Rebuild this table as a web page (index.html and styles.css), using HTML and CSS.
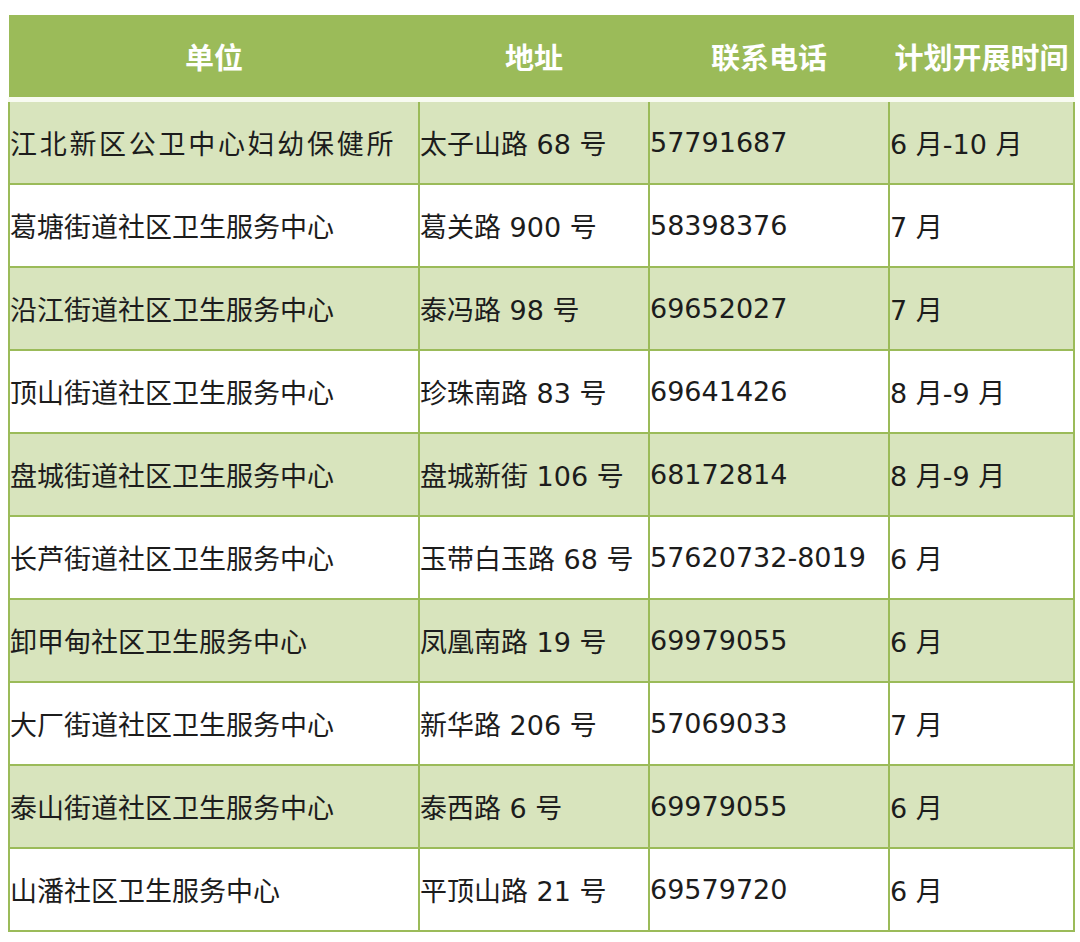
FILE: index.html
```html
<!DOCTYPE html>
<html lang="zh-CN">
<head>
<meta charset="utf-8">
<title>计划开展时间</title>
<link rel="stylesheet" href="styles.css">
</head>
<body>
<table class="plan">
  <colgroup>
    <col class="c-unit">
    <col class="c-addr">
    <col class="c-tel">
    <col class="c-time">
  </colgroup>
  <thead>
    <tr><th>单位</th><th>地址</th><th>联系电话</th><th>计划开展时间</th></tr>
  </thead>
  <tbody>
    <tr class="alt"><td class="wide">江北新区公卫中心妇幼保健所</td><td>太子山路 68 号</td><td>57791687</td><td>6 月-10 月</td></tr>
    <tr><td>葛塘街道社区卫生服务中心</td><td>葛关路 900 号</td><td>58398376</td><td>7 月</td></tr>
    <tr class="alt"><td>沿江街道社区卫生服务中心</td><td>泰冯路 98 号</td><td>69652027</td><td>7 月</td></tr>
    <tr><td>顶山街道社区卫生服务中心</td><td>珍珠南路 83 号</td><td>69641426</td><td>8 月-9 月</td></tr>
    <tr class="alt"><td>盘城街道社区卫生服务中心</td><td>盘城新街 106 号</td><td>68172814</td><td>8 月-9 月</td></tr>
    <tr><td>长芦街道社区卫生服务中心</td><td>玉带白玉路 68 号</td><td>57620732-8019</td><td>6 月</td></tr>
    <tr class="alt"><td>卸甲甸社区卫生服务中心</td><td>凤凰南路 19 号</td><td>69979055</td><td>6 月</td></tr>
    <tr><td>大厂街道社区卫生服务中心</td><td>新华路 206 号</td><td>57069033</td><td>7 月</td></tr>
    <tr class="alt"><td>泰山街道社区卫生服务中心</td><td>泰西路 6 号</td><td>69979055</td><td>6 月</td></tr>
    <tr><td>山潘社区卫生服务中心</td><td>平顶山路 21 号</td><td>69579720</td><td>6 月</td></tr>
  </tbody>
</table>
</body>
</html>
```

FILE: styles.css
```css
html, body {
  margin: 0;
  padding: 0;
  background: #ffffff;
}

body {
  padding: 15px 0 0 8px;
  font-family: "DejaVu Sans", "Noto Sans CJK SC", sans-serif;
}

.plan {
  border-collapse: collapse;
  table-layout: fixed;
  width: 1065px;
}

.c-unit { width: 410px; }
.c-addr { width: 230px; }
.c-tel { width: 240px; }
.c-time { width: 185px; }

.plan th {
  height: 82px;
  padding: 0;
  background: #9bbb59;
  color: #ffffff;
  font-family: "Noto Sans CJK SC", sans-serif;
  font-weight: 700;
  font-size: 29px;
  text-align: center;
  white-space: nowrap;
  border: 0;
  border-bottom: 5px solid #f8fbf1;
}

.plan td {
  height: 81px;
  padding: 0;
  border: 2px solid #9bbb59;
  font-size: 27px;
  color: #1c1c1c;
  white-space: nowrap;
  overflow: visible;
  vertical-align: middle;
  background: #ffffff;
}

.plan tbody tr:first-child td {
  border-top: 0;
}

.plan tr.alt td {
  background: #d8e4bd;
}

.plan td.wide {
  letter-spacing: 2.7px;
}
```
